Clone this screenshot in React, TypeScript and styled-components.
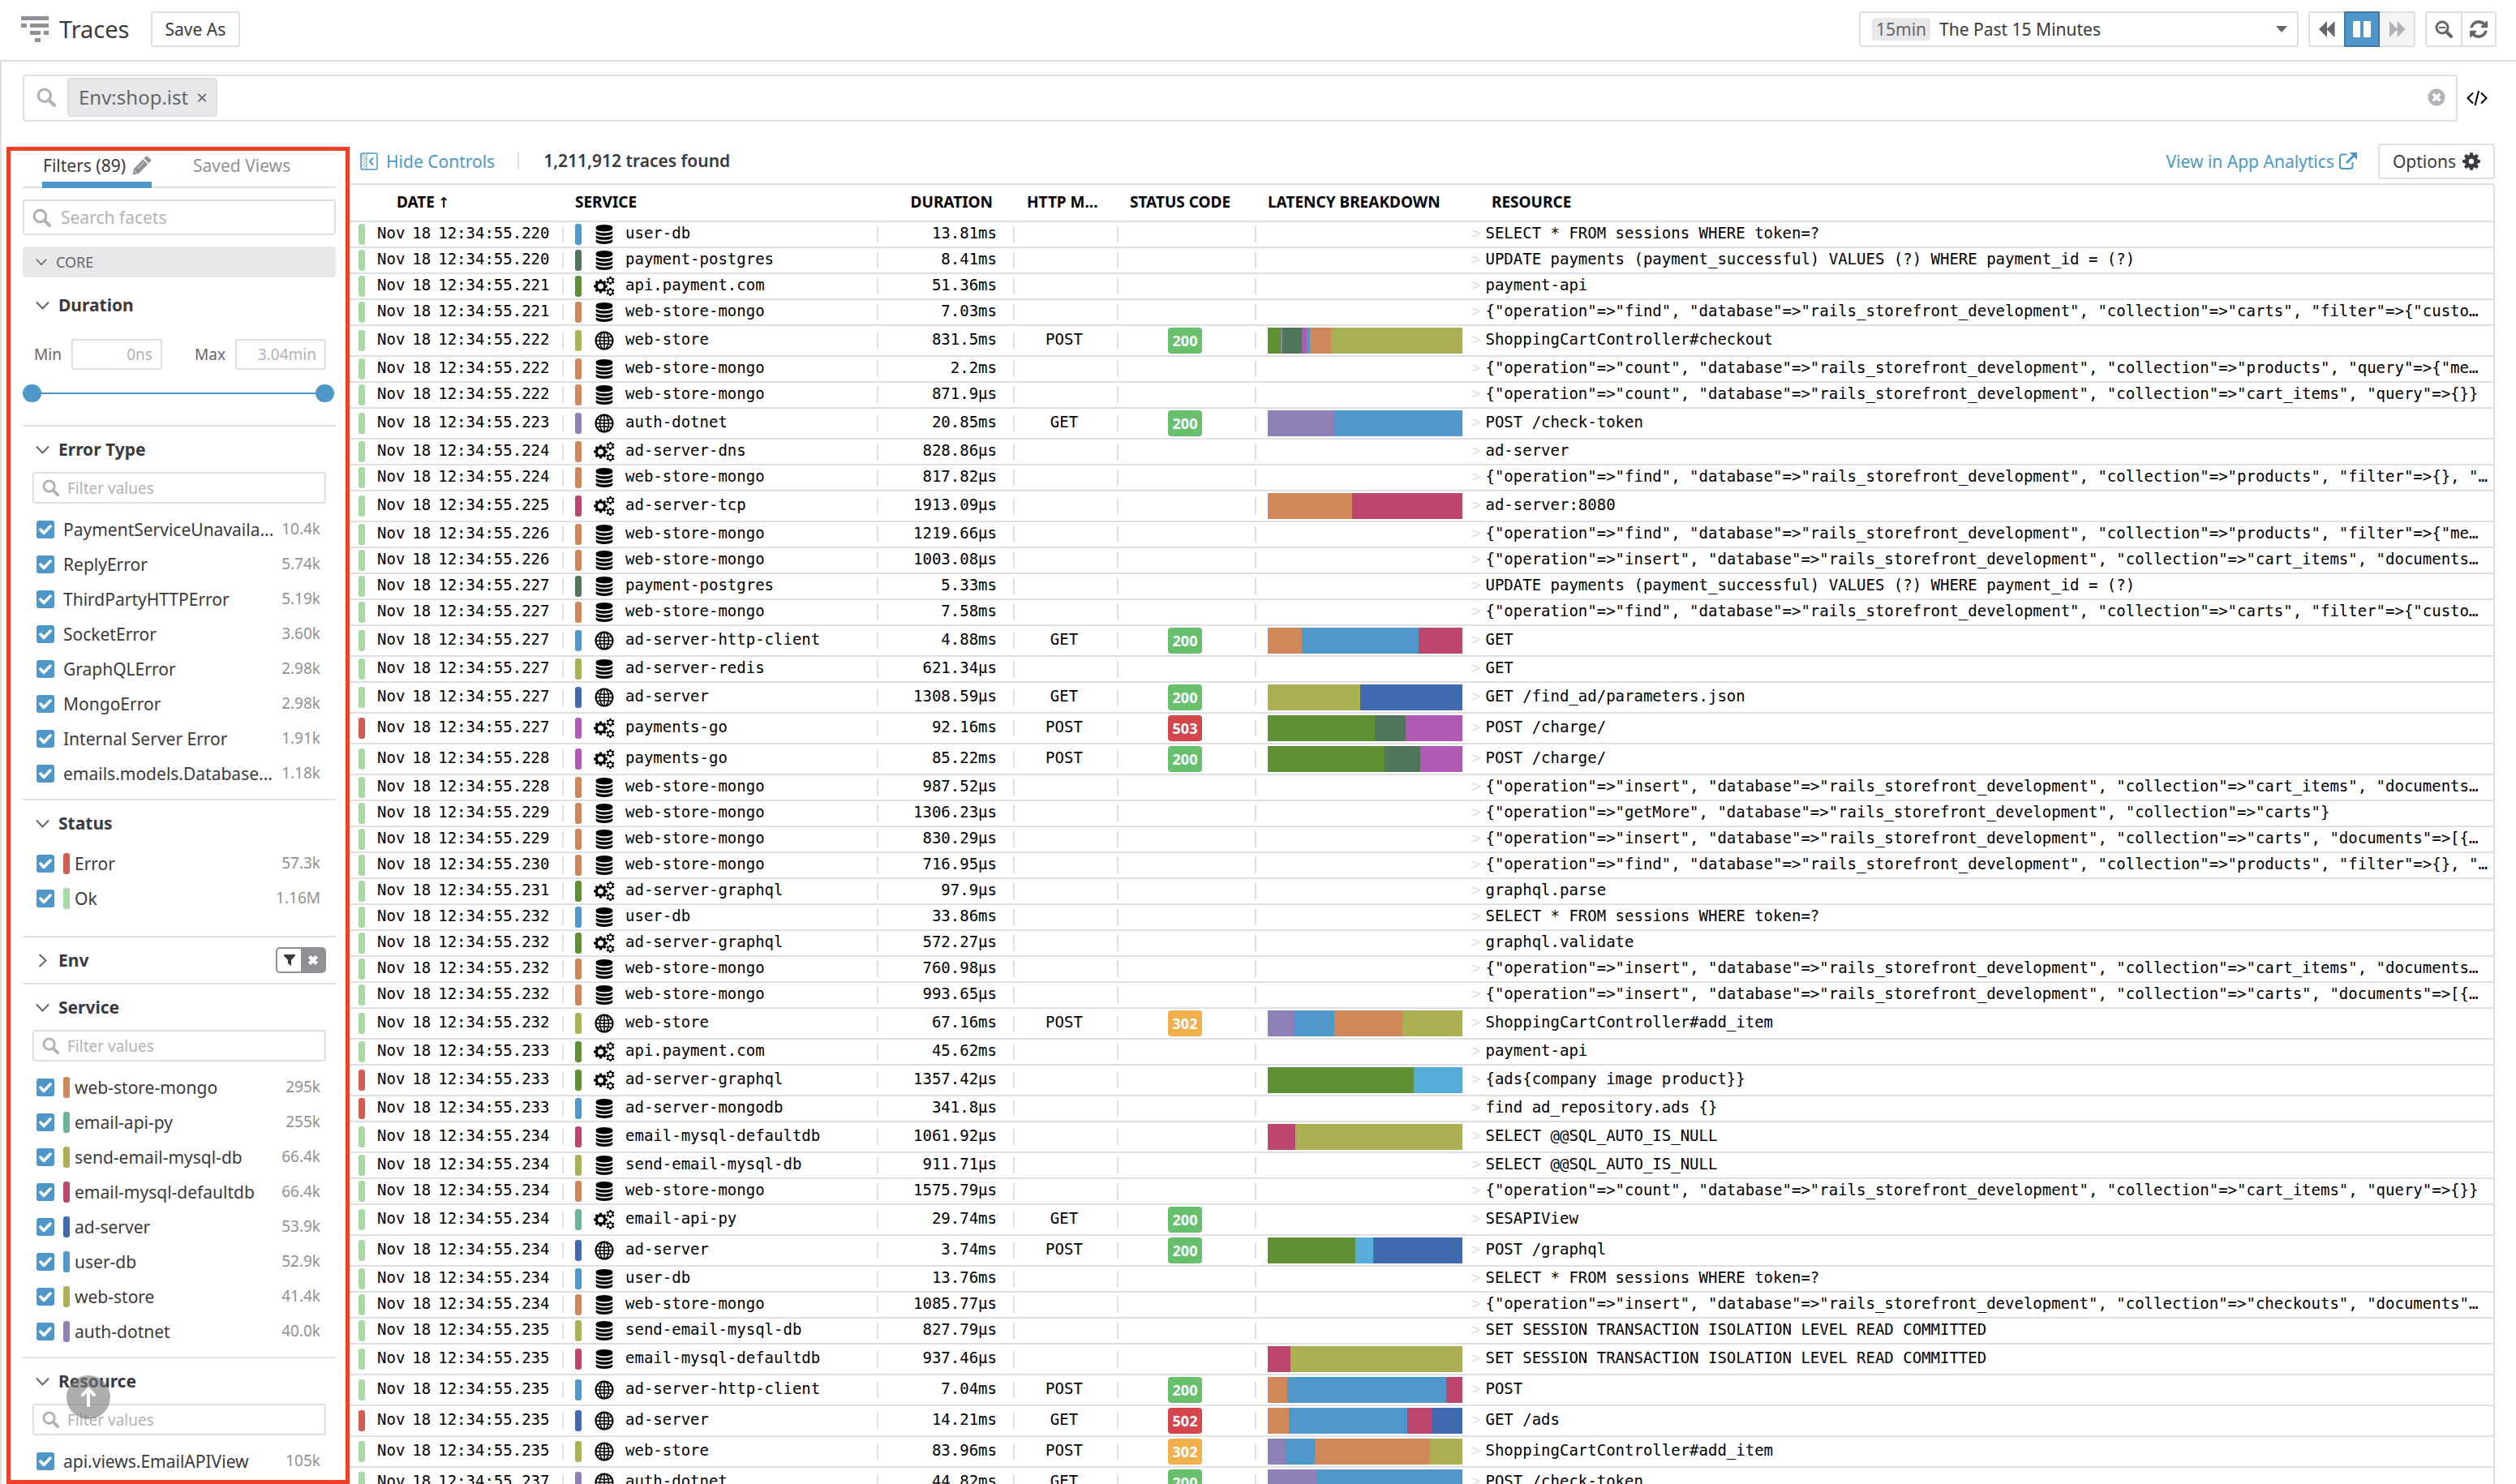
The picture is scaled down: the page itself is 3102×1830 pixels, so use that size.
import React from "react";
import styled, { createGlobalStyle, css } from "styled-components";

const color = {
  text: "#3a3a40",
  muted: "#66666b",
  soft: "#929096",
  faint: "#b3b1b7",
  line: "#dedee3",
  fill: "#e8e8ea",
  blue: "#4e97c8",
  link: "#4998cb",
  highlight: "#ee4026",
  ok: "#a7dba5",
  error: "#d35c53",
};

const hue = {
  blue: "#4f98c9",
  sky: "#58aeda",
  navy: "#426ab0",
  orange: "#d0885a",
  olive: "#abb153",
  green: "#5f9033",
  pine: "#50755a",
  purple: "#8f80b6",
  pink: "#bd466e",
  magenta: "#b05ab6",
  teal: "#70b39c",
};

const sans = `"Noto Sans", "Open Sans", sans-serif`;
const mono = `"DejaVu Sans Mono", "Liberation Mono", monospace`;

const GlobalStyle = createGlobalStyle`
  *, *::before, *::after { box-sizing: border-box; }
  body { margin: 0; background: #fff; color: ${color.text}; font: 21px/28px ${sans}; }
  button, input, select { font: inherit; color: inherit; margin: 0; }
  button { cursor: pointer; }
  h1, h2, h3, ul { margin: 0; padding: 0; }
`;

/* ---------- icons ---------- */

const Svg = styled.svg<{ $size?: number }>`
  display: block;
  flex: none;
  width: ${(p) => p.$size ?? 22}px;
  height: ${(p) => p.$size ?? 22}px;
  fill: currentColor;
`;

type IconProps = { size?: number };

const LogoIcon = () => (
  <Svg viewBox="0 0 34 34" $size={34} aria-hidden>
    <path d="M0 1h34v5H0zM0 10h7v5H0zM11 10h23v5H11zM11 19h13v5H11zM28 19h6v5h-6zM17 28h7v5h-7z" />
  </Svg>
);

const SearchIcon = ({ size }: IconProps) => (
  <Svg viewBox="0 0 22 22" $size={size} aria-hidden>
    <circle cx="9" cy="9" r="7" fill="none" stroke="currentColor" strokeWidth="3" />
    <path d="M14 14l6 6" stroke="currentColor" strokeWidth="4" strokeLinecap="round" />
  </Svg>
);

const ZoomOutIcon = () => (
  <Svg viewBox="0 0 22 22" aria-hidden>
    <circle cx="9" cy="9" r="7" fill="none" stroke="currentColor" strokeWidth="3" />
    <path d="M14 14l6 6" stroke="currentColor" strokeWidth="4" strokeLinecap="round" />
    <path d="M5 9h8" stroke="currentColor" strokeWidth="2" />
  </Svg>
);

const RefreshIcon = () => (
  <Svg viewBox="128 128 1536 1536" aria-hidden>
    <path d="M1639 1056q0 5-1 7-64 268-268 434.500t-478 166.500q-146 0-282.500-55t-243.500-157l-129 129q-19 19-45 19t-45-19-19-45v-448q0-26 19-45t45-19h448q26 0 45 19t19 45-19 45l-137 137q71 66 161 102t187 36q134 0 250-65t186-179q11-17 53-117 8-23 30-23h192q13 0 22.500 9.500t9.500 22.500zm25-800v448q0 26-19 45t-45 19h-448q-26 0-45-19t-19-45 19-45l138-138q-148-137-349-137-134 0-250 65t-186 179q-11 17-53 117-8 23-30 23h-199q-13 0-22.500-9.500t-9.500-22.500v-7q65-268 270-434.500t480-166.500q146 0 284 55.500t245 156.500l130-129q19-19 45-19t45 19 19 45z" />
  </Svg>
);

const RewindIcon = () => (
  <Svg viewBox="0 0 22 22" aria-hidden>
    <path d="M11 1v20L1 11zM20.500 1v20l-10-10z" />
  </Svg>
);

const ForwardIcon = () => (
  <Svg viewBox="0 0 22 22" aria-hidden>
    <path d="M2 1v20l10-10zM11.500 1v20l10-10z" />
  </Svg>
);

const PauseIcon = () => (
  <Svg viewBox="0 0 22 22" aria-hidden>
    <path d="M0 1h9v20H0zM13 1h9v20h-9z" />
  </Svg>
);

const CaretIcon = () => (
  <Svg viewBox="0 0 14 14" $size={14} aria-hidden>
    <path d="M0 3h14l-7 8z" />
  </Svg>
);

const ClearIcon = () => (
  <Svg viewBox="0 0 22 22" aria-hidden>
    <circle cx="11" cy="11" r="10.500" />
    <path d="M6.800 6.800l8.400 8.400M15.200 6.800l-8.400 8.400" stroke="#fff" strokeWidth="3.600" />
  </Svg>
);

const CodeIcon = () => (
  <Svg viewBox="0 0 26 26" $size={26} aria-hidden>
    <path d="M8 6.500L1.500 13 8 19.500M18 6.500l6.500 6.500-6.500 6.500M15 4l-4.500 18" fill="none" stroke="currentColor" strokeWidth="2" />
  </Svg>
);

const PencilIcon = () => (
  <Svg viewBox="0 0 24 24" $size={24} aria-hidden>
    <path d="M17 0.700q1-.8 2 0l4 4q.8 1 0 2l-2.600 2.600-6-6zM13.300 4.500l6 6L7.600 22.200l-7 1.300 1.200-7z" />
    <path d="M6.500 16l8-8M2.200 18.300l3.400 3.400" stroke="#fff" strokeWidth="1" />
  </Svg>
);

const ExternalIcon = () => (
  <Svg viewBox="0 0 22 22" aria-hidden>
    <path d="M9.500 2.500H4a3 3 0 0 0-3 3V17a3 3 0 0 0 3 3h9.500a3 3 0 0 0 3-3v-5" fill="none" stroke="currentColor" strokeWidth="2" />
    <path d="M9 13L18 4" stroke="currentColor" strokeWidth="3" />
    <path d="M13 0h9v9z" />
  </Svg>
);

const gear = (cx: number, cy: number, r: number, teeth: number, hole: number, tooth: number) => {
  const pts: string[] = [];
  for (let i = 0; i < teeth; i++) {
    const a = (i * 2 * Math.PI) / teeth;
    const s = Math.PI / teeth;
    [
      [r * tooth, -s * 0.75],
      [r, -s * 0.4],
      [r, s * 0.4],
      [r * tooth, s * 0.75],
    ].forEach(([rad, off]) => {
      pts.push(`${(cx + rad * Math.sin(a + off)).toFixed(2)} ${(cy - rad * Math.cos(a + off)).toFixed(2)}`);
    });
  }
  return `M${pts.join("L")}ZM${cx - hole} ${cy}a${hole} ${hole} 0 1 0 ${hole * 2} 0a${hole} ${hole} 0 1 0 ${-hole * 2} 0Z`;
};

const GearIcon = () => (
  <Svg viewBox="0 0 22 22" aria-hidden>
    <path fillRule="evenodd" d={gear(11, 11, 11, 8, 3.3, 0.74)} />
  </Svg>
);

const CogsIcon = () => (
  <Svg viewBox="0 0 26 24" $size={26} aria-hidden>
    <path
      fillRule="evenodd"
      d={gear(8.5, 12, 8.5, 8, 3.5, 0.76) + gear(20.5, 5, 5.2, 6, 2.2, 0.7) + gear(20.5, 19, 5.2, 6, 2.2, 0.7)}
    />
  </Svg>
);

const DatabaseIcon = () => (
  <Svg viewBox="0 0 1792 1792" $size={24} aria-hidden>
    <path d="M896 768q237 0 443-43t325-127v170q0 69-103 128t-280 93.500-385 34.500-385-34.500-280-93.500-103-128v-170q119 84 325 127t443 43zm0 768q237 0 443-43t325-127v170q0 69-103 128t-280 93.500-385 34.500-385-34.500-280-93.500-103-128v-170q119 84 325 127t443 43zm0-384q237 0 443-43t325-127v170q0 69-103 128t-280 93.500-385 34.500-385-34.500-280-93.500-103-128v-170q119 84 325 127t443 43zm0-1152q208 0 385 34.500t280 93.500 103 128v128q0 69-103 128t-280 93.500-385 34.500-385-34.500-280-93.500-103-128v-128q0-69 103-128t280-93.500 385-34.500z" />
  </Svg>
);

const GlobeIcon = () => (
  <Svg viewBox="0 0 24 24" $size={24} aria-hidden>
    <g fill="none" stroke="currentColor" strokeWidth="1.500">
      <circle cx="12" cy="12" r="10.500" strokeWidth="2" />
      <ellipse cx="12" cy="12" rx="5.500" ry="10.500" />
      <path d="M12 1.500v21M1.500 12h21M3 7q9 2.500 18 0M3 17q9-2.500 18 0" />
    </g>
  </Svg>
);

const PanelIcon = () => (
  <Svg viewBox="0 0 22 22" aria-hidden>
    <rect x="1" y="1" width="20" height="20" rx="2" fill="none" stroke="currentColor" strokeWidth="1.500" />
    <path d="M8 1v20M1 6l5-5M1 10l7-7M1 14l7-7M1 18l7-7M3 20l5-5" stroke="currentColor" strokeWidth="1" opacity="0.8" />
    <path d="M16 6.500L12 11l4 4.500" fill="none" stroke="currentColor" strokeWidth="2" />
  </Svg>
);

const ChevronDown = ({ size = 17 }: IconProps) => (
  <Svg viewBox="0 0 17 17" $size={size} aria-hidden>
    <path d="M1 4.500l7.500 8 7.500-8" fill="none" stroke="currentColor" strokeWidth="2" />
  </Svg>
);

const ChevronRight = () => (
  <Svg viewBox="0 0 17 17" $size={17} aria-hidden>
    <path d="M4.500 1l8 7.500-8 7.500" fill="none" stroke="currentColor" strokeWidth="2" />
  </Svg>
);

const CheckIcon = styled(Svg)`
  grid-area: 1 / 1;
  place-self: center;
  pointer-events: none;
  color: #fff;
`;

const FunnelIcon = () => (
  <Svg viewBox="0 0 16 16" $size={16} aria-hidden>
    <path d="M1 1h14v1.500L10 8v7l-4-3V8L1 2.500z" />
  </Svg>
);

const CrossIcon = () => (
  <Svg viewBox="0 0 14 14" $size={14} aria-hidden>
    <path d="M2.500 2.500l9 9M11.500 2.500l-9 9" stroke="currentColor" strokeWidth="4.400" />
  </Svg>
);

const ArrowUpIcon = () => (
  <Svg viewBox="0 0 24 24" $size={24} aria-hidden>
    <path d="M12 23V2M5 9l7-7 7 7" fill="none" stroke="currentColor" strokeWidth="4" strokeLinecap="round" strokeLinejoin="round" />
  </Svg>
);

/* ---------- page frame ---------- */

const Page = styled.div`
  display: flex;
  flex-direction: column;
  height: 100vh;
  overflow: hidden;
`;

const TopBar = styled.header`
  display: flex;
  align-items: center;
  flex: none;
  height: 76px;
  padding: 0 24px 2px 26px;
  border-bottom: 2px solid ${color.line};
`;

const Brand = styled.div`
  display: flex;
  align-items: center;
  gap: 13px;
  margin-right: 26px;
  color: ${color.soft};
`;

const Title = styled.h1`
  color: ${color.text};
  font-size: 29px;
  font-weight: 400;
  line-height: 36px;
`;

const Button = styled.button`
  display: flex;
  align-items: center;
  gap: 8px;
  height: 44px;
  padding: 0 16px;
  background: #fff;
  border: 2px solid ${color.line};
  border-radius: 4px;
`;

const Controls = styled.div`
  display: flex;
  gap: 12px;
  margin-left: auto;
`;

const RangePicker = styled.label`
  display: flex;
  align-items: center;
  gap: 11px;
  width: 542px;
  height: 44px;
  padding: 0 12px 0 14px;
  border: 2px solid ${color.line};
  border-radius: 4px;
  color: ${color.muted};
`;

const RangeChip = styled.span`
  padding: 0 5px;
  border-radius: 4px;
  background: ${color.fill};
`;

const RangeSelect = styled.select`
  flex: 1;
  min-width: 0;
  padding: 0;
  appearance: none;
  border: 0;
  background: none;
  color: ${color.text};
`;

const ButtonGroup = styled.div`
  display: flex;
  border: 2px solid ${color.line};
  border-radius: 4px;
`;

const GroupButton = styled.button<{ $active?: boolean; $divided?: boolean }>`
  display: grid;
  place-items: center;
  width: 42px;
  height: 40px;
  padding: 0;
  border: 0;
  background: #fff;
  color: ${color.muted};
  ${(p) => p.$divided && css`border-left: 2px solid ${color.line};`}
  ${(p) =>
    p.$active &&
    css`
      width: 44px;
      height: 44px;
      margin: -2px 0;
      border: 2px solid #3f7ba6;
      background: ${color.blue};
      color: #fff;
    `}
  &:disabled {
    background: #f4f4f4;
    color: ${color.faint};
  }
`;

const Content = styled.div`
  display: flex;
  flex-direction: column;
  flex: 1;
  min-height: 0;
  border-left: 2px solid ${color.line};
`;

const SearchRow = styled.form`
  display: flex;
  align-items: center;
  gap: 11px;
  flex: none;
  padding: 16px 35px 0 26px;
`;

const SearchBox = styled.div`
  display: flex;
  align-items: center;
  flex: 1;
  gap: 14px;
  height: 58px;
  padding: 0 13px 2px 15px;
  border: 2px solid ${color.line};
  border-radius: 4px;
  color: ${color.faint};
`;

const Tag = styled.span`
  display: flex;
  align-items: center;
  gap: 10px;
  height: 48px;
  padding: 0 10px 0 12px;
  border: 2px solid ${color.line};
  border-radius: 4px;
  background: ${color.fill};
  color: ${color.muted};
  font-size: 24px;
`;

const BareInput = styled.input`
  flex: 1;
  min-width: 0;
  padding: 0;
  border: 0;
  outline: 0;
  background: none;
  color: ${color.text};
  &::placeholder {
    color: ${color.faint};
    opacity: 1;
  }
`;

const IconButton = styled.button<{ $tone?: string }>`
  display: grid;
  place-items: center;
  padding: 0;
  border: 0;
  background: none;
  color: ${(p) => p.$tone ?? "inherit"};
`;

const Body = styled.div`
  display: flex;
  flex: 1;
  min-height: 0;
`;

/* ---------- sidebar ---------- */

const Sidebar = styled.aside`
  flex: none;
  width: 423px;
  margin: 31px 0 0 6px;
  padding: 0 12px 0 15px;
  border: 5px solid ${color.highlight};
  overflow: hidden;
`;

const Tabs = styled.div`
  display: flex;
  gap: 50px;
  padding-left: 24px;
  box-shadow: inset 0 -2px ${color.line};
`;

const Tab = styled.button<{ $active?: boolean }>`
  display: flex;
  align-items: center;
  gap: 8px;
  height: 46px;
  padding: 0 0 2px 1px;
  border: 0;
  border-bottom: 8px solid ${(p) => (p.$active ? color.blue : "transparent")};
  background: none;
  color: ${(p) => (p.$active ? color.text : color.soft)};
  svg {
    color: ${color.soft};
  }
`;

const FacetSearch = styled.label`
  display: flex;
  align-items: center;
  gap: 12px;
  height: 44px;
  margin-top: 14px;
  padding: 0 10px;
  border: 2px solid ${color.line};
  border-radius: 4px;
  color: ${color.faint};
`;

const GroupHeading = styled.h2`
  display: flex;
  align-items: center;
  gap: 11px;
  height: 38px;
  margin: 14px 0 6px;
  padding-left: 16px;
  border-radius: 4px;
  background: ${color.fill};
  color: ${color.muted};
  font-size: 18px;
  font-weight: 400;
`;

const Facet = styled.section<{ $bottom?: number }>`
  padding: 0 12px ${(p) => p.$bottom ?? 0}px;
  & + & {
    border-top: 2px solid ${color.line};
  }
`;

const FacetHeading = styled.h3`
  display: flex;
  align-items: center;
  gap: 11px;
  height: 56px;
  padding-left: 4px;
  color: ${color.muted};
  font-size: 21px;
`;

const FacetName = styled.span`
  flex: 1;
  color: ${color.text};
`;

const ValueFilter = styled.label`
  display: flex;
  align-items: center;
  gap: 10px;
  height: 39px;
  padding: 0 10px;
  border: 2px solid ${color.line};
  border-radius: 3px;
  color: ${color.faint};
  font-size: 19px;
`;

const ValueList = styled.ul<{ $top: number }>`
  padding-top: ${(p) => p.$top}px;
  list-style: none;
`;

const ValueRow = styled.label`
  display: flex;
  align-items: center;
  height: 43px;
  padding: 0 7px 0 5px;
`;

const CheckWrap = styled.span`
  display: grid;
  flex: none;
  margin-right: 11px;
`;

const Check = styled.input`
  grid-area: 1 / 1;
  width: 22px;
  height: 22px;
  appearance: none;
  border-radius: 3px;
  background: ${color.blue};
`;

const Swatch = styled.span<{ $color: string }>`
  flex: none;
  width: 8px;
  height: 26px;
  border-radius: 3px;
  background: ${(p) => p.$color};
`;

const ValueSwatch = styled(Swatch)`
  margin-right: 6px;
`;

const ValueName = styled.span`
  flex: 1;
  white-space: nowrap;
`;

const ValueCount = styled.span`
  padding-bottom: 2px;
  color: ${color.soft};
  font-size: 19px;
`;

const MinMax = styled.div`
  display: flex;
  justify-content: space-between;
  margin-top: 14px;
`;

const Bound = styled.label`
  display: flex;
  align-items: center;
  gap: 12px;
  padding-left: 2px;
  color: ${color.muted};
  font-size: 19px;
`;

const BoundInput = styled.input`
  width: 112px;
  height: 38px;
  padding: 0 10px;
  border: 2px solid ${color.line};
  border-radius: 3px;
  color: ${color.faint};
  text-align: right;
`;

const DualSlider = styled.div`
  position: relative;
  height: 24px;
  margin: 17px -10px 27px -12px;
  background: linear-gradient(${color.blue}, ${color.blue}) center / calc(100% - 24px) 2px no-repeat;
`;

const Slider = styled.input`
  position: absolute;
  inset: 0;
  width: 100%;
  height: 24px;
  margin: 0;
  appearance: none;
  background: none;
  pointer-events: none;
  &::-webkit-slider-thumb {
    width: 23px;
    height: 22px;
    appearance: none;
    border-radius: 11px;
    background: ${color.blue};
    pointer-events: auto;
  }
`;

const FilterToggle = styled.span`
  display: flex;
  height: 32px;
  border: 2px solid ${color.soft};
  border-radius: 5px;
`;

const ToggleButton = styled.button<{ $filled?: boolean }>`
  display: grid;
  place-items: center;
  width: 29px;
  padding: 0;
  border: 0;
  background: ${(p) => (p.$filled ? color.soft : "none")};
  color: ${(p) => (p.$filled ? "#fff" : color.text)};
`;

const ScrollTop = styled.button`
  position: fixed;
  left: 82px;
  bottom: 80px;
  display: grid;
  place-items: center;
  width: 54px;
  height: 54px;
  padding: 0;
  border: 0;
  border-radius: 50%;
  background: rgba(120, 120, 120, 0.6);
  color: #fff;
`;

/* ---------- trace list ---------- */

const Main = styled.main`
  flex: 1;
  min-width: 0;
  margin-right: 26px;
  padding-top: 27px;
  overflow: hidden;
`;

const Toolbar = styled.div`
  display: flex;
  align-items: center;
  height: 44px;
  margin-bottom: 5px;
  padding-left: 13px;
`;

const LinkButton = styled.button`
  display: flex;
  align-items: center;
  gap: 10px;
  padding: 0 28px 0 0;
  border: 0;
  background: none;
  color: ${color.link};
`;

const Found = styled.strong`
  padding: 0 0 2px 30px;
  border-left: 2px solid ${color.line};
  font-weight: 600;
  line-height: 20px;
`;

const AnalyticsLink = styled.a`
  display: flex;
  align-items: center;
  gap: 6px;
  margin: 0 26px 0 auto;
  color: ${color.link};
  text-decoration: none;
`;

const Table = styled.table`
  width: 100%;
  table-layout: fixed;
  border: solid ${color.line};
  border-width: 2px 2px 0 0;
  border-radius: 0 4px 0 0;
  border-spacing: 0;
  color: #000;
`;

const Col = styled.col<{ $width?: number }>`
  width: ${(p) => (p.$width ? `${p.$width}px` : "auto")};
`;

const HeadCell = styled.th<{ $left?: number; $right?: number; $align?: string }>`
  height: 46px;
  padding: 0 ${(p) => p.$right ?? 0}px 2px ${(p) => p.$left ?? 0}px;
  border-bottom: 2px solid ${color.line};
  font-size: 19px;
  text-align: ${(p) => p.$align ?? "left"};
  white-space: nowrap;
`;

const SortArrow = styled.span`
  margin-left: 4px;
  font: 24px/20px ${mono};
`;

const BodyCell = styled.td<{ $tall?: boolean }>`
  height: ${(p) => (p.$tall ? 38 : 32)}px;
  padding: 0;
  border-bottom: 2px solid ${color.line};
  font: 19px/18px ${mono};
  white-space: nowrap;
`;

const Cell = styled.div<{ $align?: string; $plain?: boolean }>`
  display: flex;
  align-items: center;
  justify-content: ${(p) => p.$align ?? "flex-start"};
  height: 20px;
  padding-left: ${(p) => (p.$align === "center" ? 10 : 14)}px;
  padding-right: ${(p) => (p.$align === "flex-end" ? 20 : 14)}px;
  border-right: ${(p) => (p.$plain ? 0 : 2)}px solid ${color.line};
`;

const DateCell = styled(Cell)`
  padding-left: 11px;
`;

const CellText = styled.span`
  padding-bottom: 4px;
`;

const Stamp = styled.time`
  display: flex;
  gap: 9px;
  margin-left: 15px;
  padding-bottom: 4px;
`;

const ServiceIcon = styled.span`
  display: grid;
  place-items: center;
  flex: none;
  width: 26px;
  margin: 0 13px 0 15px;
`;

const Badge = styled.span<{ $color: string }>`
  flex: none;
  width: 42px;
  border-radius: 4px;
  background: ${(p) => p.$color};
  color: #fff;
  font: 700 18px/32px ${sans};
  text-align: center;
`;

const LatencyBar = styled.div`
  display: flex;
  flex: none;
  width: 240px;
  height: 32px;
`;

const Segment = styled.span<{ $color: string; $share: number }>`
  flex: ${(p) => p.$share} 0 0;
  background: ${(p) => p.$color};
`;

const ResourceCell = styled.div`
  display: flex;
  align-items: center;
  gap: 6px;
  padding: 0 0 4px 1px;
  line-height: 24px;
`;

const Marker = styled.span`
  color: ${color.line};
`;

/* ---------- data ---------- */

type Kind = "db" | "cogs" | "web";

const services: Record<string, [string, Kind]> = {
  "user-db": [hue.blue, "db"],
  "payment-postgres": [hue.pine, "db"],
  "api.payment.com": [hue.green, "cogs"],
  "web-store-mongo": [hue.orange, "db"],
  "web-store": [hue.olive, "web"],
  "auth-dotnet": [hue.purple, "web"],
  "ad-server-dns": [hue.orange, "cogs"],
  "ad-server-tcp": [hue.pink, "cogs"],
  "ad-server-http-client": [hue.blue, "web"],
  "ad-server-redis": [hue.olive, "db"],
  "ad-server": [hue.navy, "web"],
  "payments-go": [hue.magenta, "cogs"],
  "ad-server-graphql": [hue.green, "cogs"],
  "ad-server-mongodb": [hue.blue, "db"],
  "email-mysql-defaultdb": [hue.pink, "db"],
  "send-email-mysql-db": [hue.olive, "db"],
  "email-api-py": [hue.teal, "cogs"],
};

type Seg = [string, number];

type Trace = {
  ms: number;
  service: string;
  duration: string;
  resource: string;
  method?: string;
  code?: number;
  latency?: Seg[];
  failed?: boolean;
};

const t = (ms: number, service: string, duration: string, resource: string, more: Partial<Trace> = {}): Trace => ({
  ms,
  service,
  duration,
  resource,
  ...more,
});

const op = (name: string, rest: string) =>
  `{"operation"=>"${name}", "database"=>"rails_storefront_development", "collection"=>${rest}`;

const findCarts = op("find", `"carts", "filter"=>{"custo…`);
const insertItems = op("insert", `"cart_items", "documents…`);
const insertCarts = op("insert", `"carts", "documents"=>[{…`);
const findProducts = op("find", `"products", "filter"=>{}, "…`);
const countItems = op("count", `"cart_items", "query"=>{}}`);
const selectSession = "SELECT * FROM sessions WHERE token=?";
const updatePayment = "UPDATE payments (payment_successful) VALUES (?) WHERE payment_id = (?)";
const isolation = "SET SESSION TRANSACTION ISOLATION LEVEL READ COMMITTED";

const traces: Trace[] = [
  t(220, "user-db", "13.81ms", selectSession),
  t(220, "payment-postgres", "8.41ms", updatePayment),
  t(221, "api.payment.com", "51.36ms", "payment-api"),
  t(221, "web-store-mongo", "7.03ms", findCarts),
  t(222, "web-store", "831.5ms", "ShoppingCartController#checkout", {
    method: "POST",
    code: 200,
    latency: [[hue.green, 29], [hue.purple, 3], [hue.pine, 44], [hue.magenta, 12], [hue.blue, 6], [hue.orange, 48], [hue.olive, 295]],
  }),
  t(222, "web-store-mongo", "2.2ms", op("count", `"products", "query"=>{"me…`)),
  t(222, "web-store-mongo", "871.9µs", countItems),
  t(223, "auth-dotnet", "20.85ms", "POST /check-token", {
    method: "GET",
    code: 200,
    latency: [[hue.purple, 149], [hue.blue, 288]],
  }),
  t(224, "ad-server-dns", "828.86µs", "ad-server"),
  t(224, "web-store-mongo", "817.82µs", findProducts),
  t(225, "ad-server-tcp", "1913.09µs", "ad-server:8080", { latency: [[hue.orange, 189], [hue.pink, 248]] }),
  t(226, "web-store-mongo", "1219.66µs", op("find", `"products", "filter"=>{"me…`)),
  t(226, "web-store-mongo", "1003.08µs", insertItems),
  t(227, "payment-postgres", "5.33ms", updatePayment),
  t(227, "web-store-mongo", "7.58ms", findCarts),
  t(227, "ad-server-http-client", "4.88ms", "GET", {
    method: "GET",
    code: 200,
    latency: [[hue.orange, 94], [hue.blue, 323], [hue.pink, 120]],
  }),
  t(227, "ad-server-redis", "621.34µs", "GET"),
  t(227, "ad-server", "1308.59µs", "GET /find_ad/parameters.json", {
    method: "GET",
    code: 200,
    latency: [[hue.olive, 255], [hue.navy, 282]],
  }),
  t(227, "payments-go", "92.16ms", "POST /charge/", {
    method: "POST",
    code: 503,
    failed: true,
    latency: [[hue.green, 296], [hue.pine, 85], [hue.magenta, 156]],
  }),
  t(228, "payments-go", "85.22ms", "POST /charge/", {
    method: "POST",
    code: 200,
    latency: [[hue.green, 322], [hue.pine, 99], [hue.magenta, 116]],
  }),
  t(228, "web-store-mongo", "987.52µs", insertItems),
  t(229, "web-store-mongo", "1306.23µs", op("getMore", `"carts"}`)),
  t(229, "web-store-mongo", "830.29µs", insertCarts),
  t(230, "web-store-mongo", "716.95µs", findProducts),
  t(231, "ad-server-graphql", "97.9µs", "graphql.parse"),
  t(232, "user-db", "33.86ms", selectSession),
  t(232, "ad-server-graphql", "572.27µs", "graphql.validate"),
  t(232, "web-store-mongo", "760.98µs", insertItems),
  t(232, "web-store-mongo", "993.65µs", insertCarts),
  t(232, "web-store", "67.16ms", "ShoppingCartController#add_item", {
    method: "POST",
    code: 302,
    latency: [[hue.purple, 73], [hue.blue, 111], [hue.orange, 188], [hue.olive, 165]],
  }),
  t(233, "api.payment.com", "45.62ms", "payment-api"),
  t(233, "ad-server-graphql", "1357.42µs", "{ads{company image product}}", {
    failed: true,
    latency: [[hue.green, 403], [hue.sky, 134]],
  }),
  t(233, "ad-server-mongodb", "341.8µs", "find ad_repository.ads {}", { failed: true }),
  t(234, "email-mysql-defaultdb", "1061.92µs", "SELECT @@SQL_AUTO_IS_NULL", {
    latency: [[hue.pink, 76], [hue.olive, 461]],
  }),
  t(234, "send-email-mysql-db", "911.71µs", "SELECT @@SQL_AUTO_IS_NULL"),
  t(234, "web-store-mongo", "1575.79µs", countItems),
  t(234, "email-api-py", "29.74ms", "SESAPIView", { method: "GET", code: 200 }),
  t(234, "ad-server", "3.74ms", "POST /graphql", {
    method: "POST",
    code: 200,
    latency: [[hue.green, 242], [hue.sky, 49], [hue.navy, 246]],
  }),
  t(234, "user-db", "13.76ms", selectSession),
  t(234, "web-store-mongo", "1085.77µs", op("insert", `"checkouts", "documents"…`)),
  t(235, "send-email-mysql-db", "827.79µs", isolation),
  t(235, "email-mysql-defaultdb", "937.46µs", isolation, { latency: [[hue.pink, 63], [hue.olive, 474]] }),
  t(235, "ad-server-http-client", "7.04ms", "POST", {
    method: "POST",
    code: 200,
    latency: [[hue.orange, 54], [hue.blue, 439], [hue.pink, 44]],
  }),
  t(235, "ad-server", "14.21ms", "GET /ads", {
    method: "GET",
    code: 502,
    failed: true,
    latency: [[hue.orange, 58], [hue.blue, 327], [hue.pink, 67], [hue.navy, 85]],
  }),
  t(235, "web-store", "83.96ms", "ShoppingCartController#add_item", {
    method: "POST",
    code: 302,
    latency: [[hue.purple, 49], [hue.blue, 81], [hue.orange, 318], [hue.olive, 89]],
  }),
  t(237, "auth-dotnet", "44.82ms", "POST /check-token", {
    method: "GET",
    code: 200,
    latency: [[hue.purple, 134], [hue.blue, 403]],
  }),
];

const badgeColor = (code: number) => (code >= 500 ? "#d5454c" : code >= 300 ? "#f2b04c" : "#68c06c");

type FacetValue = [name: string, count: string, swatch?: string];

const errorTypes: FacetValue[] = [
  ["PaymentServiceUnavaila...", "10.4k"],
  ["ReplyError", "5.74k"],
  ["ThirdPartyHTTPError", "5.19k"],
  ["SocketError", "3.60k"],
  ["GraphQLError", "2.98k"],
  ["MongoError", "2.98k"],
  ["Internal Server Error", "1.91k"],
  ["emails.models.Database...", "1.18k"],
];

const statuses: FacetValue[] = [
  ["Error", "57.3k", color.error],
  ["Ok", "1.16M", color.ok],
];

const serviceValues: FacetValue[] = [
  ["web-store-mongo", "295k", hue.orange],
  ["email-api-py", "255k", hue.teal],
  ["send-email-mysql-db", "66.4k", hue.olive],
  ["email-mysql-defaultdb", "66.4k", hue.pink],
  ["ad-server", "53.9k", hue.navy],
  ["user-db", "52.9k", hue.blue],
  ["web-store", "41.4k", hue.olive],
  ["auth-dotnet", "40.0k", hue.purple],
];

/* ---------- composed parts ---------- */

const kindIcon: Record<Kind, React.ReactNode> = {
  db: <DatabaseIcon />,
  cogs: <CogsIcon />,
  web: <GlobeIcon />,
};

const Values = ({ items, top = 10 }: { items: FacetValue[]; top?: number }) => (
  <ValueList $top={top}>
    {items.map(([name, count, swatch]) => (
      <li key={name}>
        <ValueRow>
          <CheckWrap>
            <Check type="checkbox" defaultChecked />
            <CheckIcon viewBox="0 0 16 16" $size={16} aria-hidden>
              <path d="M2 8l4 4.500L14 4" fill="none" stroke="currentColor" strokeWidth="3.500" strokeLinejoin="round" strokeLinecap="round" />
            </CheckIcon>
          </CheckWrap>
          {swatch && <ValueSwatch $color={swatch} />}
          <ValueName>{name}</ValueName>
          <ValueCount>{count}</ValueCount>
        </ValueRow>
      </li>
    ))}
  </ValueList>
);

const Heading = ({ name, closed, children }: { name: string; closed?: boolean; children?: React.ReactNode }) => (
  <FacetHeading>
    {closed ? <ChevronRight /> : <ChevronDown />}
    <FacetName>{name}</FacetName>
    {children}
  </FacetHeading>
);

const FilterValues = ({ of }: { of: string }) => (
  <ValueFilter>
    <SearchIcon size={21} />
    <BareInput placeholder="Filter values" aria-label={`Filter ${of} values`} />
  </ValueFilter>
);

const TraceRow = ({ trace }: { trace: Trace }) => {
  const [tint, kind] = services[trace.service];
  const tall = Boolean(trace.code || trace.latency);
  return (
    <tr>
      <BodyCell $tall={tall}>
        <DateCell>
          <Swatch $color={trace.failed ? color.error : color.ok} />
          <Stamp>
            <span>Nov</span>
            <span>18</span>
            <span>12:34:55.{trace.ms}</span>
          </Stamp>
        </DateCell>
      </BodyCell>
      <BodyCell $tall={tall}>
        <Cell>
          <Swatch $color={tint} />
          <ServiceIcon>{kindIcon[kind]}</ServiceIcon>
          <CellText>{trace.service}</CellText>
        </Cell>
      </BodyCell>
      <BodyCell $tall={tall}>
        <Cell $align="flex-end">
          <CellText>{trace.duration}</CellText>
        </Cell>
      </BodyCell>
      <BodyCell $tall={tall}>
        <Cell $align="center">
          <CellText>{trace.method}</CellText>
        </Cell>
      </BodyCell>
      <BodyCell $tall={tall}>
        <Cell $align="center">{trace.code && <Badge $color={badgeColor(trace.code)}>{trace.code}</Badge>}</Cell>
      </BodyCell>
      <BodyCell $tall={tall}>
        <Cell $plain>
          {trace.latency && (
            <LatencyBar>
              {trace.latency.map(([c, share], i) => (
                <Segment key={i} $color={c} $share={share} />
              ))}
            </LatencyBar>
          )}
        </Cell>
      </BodyCell>
      <BodyCell $tall={tall}>
        <ResourceCell>
          <Marker>&gt;</Marker>
          <span>{trace.resource}</span>
        </ResourceCell>
      </BodyCell>
    </tr>
  );
};

export default function App() {
  return (
    <Page>
      <GlobalStyle />
      <TopBar>
        <Brand>
          <LogoIcon />
          <Title>Traces</Title>
        </Brand>
        <Button type="button">Save As</Button>
        <Controls>
          <RangePicker>
            <RangeChip>15min</RangeChip>
            <RangeSelect aria-label="Time range">
              <option>The Past 15 Minutes</option>
            </RangeSelect>
            <CaretIcon />
          </RangePicker>
          <ButtonGroup>
            <GroupButton type="button" aria-label="Back">
              <RewindIcon />
            </GroupButton>
            <GroupButton type="button" aria-label="Pause" $active>
              <PauseIcon />
            </GroupButton>
            <GroupButton type="button" aria-label="Forward" disabled>
              <ForwardIcon />
            </GroupButton>
          </ButtonGroup>
          <ButtonGroup>
            <GroupButton type="button" aria-label="Zoom out">
              <ZoomOutIcon />
            </GroupButton>
            <GroupButton type="button" aria-label="Refresh" $divided>
              <RefreshIcon />
            </GroupButton>
          </ButtonGroup>
        </Controls>
      </TopBar>
      <Content>
        <SearchRow>
          <SearchBox>
            <SearchIcon size={24} />
            <Tag>
              Env:shop.ist
              <IconButton type="button" aria-label="Remove Env:shop.ist">
                ×
              </IconButton>
            </Tag>
            <BareInput aria-label="Search traces" />
            <IconButton type="button" aria-label="Clear search">
              <ClearIcon />
            </IconButton>
          </SearchBox>
          <IconButton type="button" aria-label="Edit as code" $tone="#000">
            <CodeIcon />
          </IconButton>
        </SearchRow>
        <Body>
          <Sidebar>
            <Tabs>
              <Tab type="button" $active>
                Filters (89)
                <PencilIcon />
              </Tab>
              <Tab type="button">Saved Views</Tab>
            </Tabs>
            <FacetSearch>
              <SearchIcon size={23} />
              <BareInput placeholder="Search facets" aria-label="Search facets" />
            </FacetSearch>
            <GroupHeading>
              <ChevronDown size={14} />
              CORE
            </GroupHeading>
            <Facet>
              <Heading name="Duration" />
              <MinMax>
                <Bound>
                  Min
                  <BoundInput defaultValue="0ns" />
                </Bound>
                <Bound>
                  Max
                  <BoundInput defaultValue="3.04min" />
                </Bound>
              </MinMax>
              <DualSlider>
                <Slider type="range" aria-label="Minimum duration" min={0} max={100} defaultValue={0} />
                <Slider type="range" aria-label="Maximum duration" min={0} max={100} defaultValue={100} />
              </DualSlider>
            </Facet>
            <Facet $bottom={10}>
              <Heading name="Error Type" />
              <FilterValues of="error type" />
              <Values items={errorTypes} />
            </Facet>
            <Facet $bottom={25}>
              <Heading name="Status" />
              <Values items={statuses} top={0} />
            </Facet>
            <Facet>
              <Heading name="Env" closed>
                <FilterToggle>
                  <ToggleButton type="button" aria-label="Filter by env">
                    <FunnelIcon />
                  </ToggleButton>
                  <ToggleButton type="button" aria-label="Clear env filter" $filled>
                    <CrossIcon />
                  </ToggleButton>
                </FilterToggle>
              </Heading>
            </Facet>
            <Facet $bottom={10}>
              <Heading name="Service" />
              <FilterValues of="service" />
              <Values items={serviceValues} />
            </Facet>
            <Facet>
              <Heading name="Resource" />
              <FilterValues of="resource" />
              <Values items={[["api.views.EmailAPIView", "105k"]]} />
            </Facet>
          </Sidebar>
          <Main>
            <Toolbar>
              <LinkButton type="button">
                <PanelIcon />
                Hide Controls
              </LinkButton>
              <Found>1,211,912 traces found</Found>
              <AnalyticsLink href="#analytics">
                View in App Analytics
                <ExternalIcon />
              </AnalyticsLink>
              <Button type="button">
                Options
                <GearIcon />
              </Button>
            </Toolbar>
            <Table>
              <colgroup>
                <Col $width={264} />
                <Col $width={388} />
                <Col $width={168} />
                <Col $width={128} />
                <Col $width={170} />
                <Col $width={264} />
                <Col />
              </colgroup>
              <thead>
                <tr>
                  <HeadCell $left={58}>
                    DATE<SortArrow>↑</SortArrow>
                  </HeadCell>
                  <HeadCell $left={14}>SERVICE</HeadCell>
                  <HeadCell $align="right" $right={27}>DURATION</HeadCell>
                  <HeadCell $left={15}>HTTP M...</HeadCell>
                  <HeadCell $left={14}>STATUS CODE</HeadCell>
                  <HeadCell $left={14}>LATENCY BREAKDOWN</HeadCell>
                  <HeadCell $left={26}>RESOURCE</HeadCell>
                </tr>
              </thead>
              <tbody>
                {traces.map((trace, i) => (
                  <TraceRow key={i} trace={trace} />
                ))}
              </tbody>
            </Table>
          </Main>
        </Body>
      </Content>
      <ScrollTop type="button" aria-label="Scroll to top">
        <ArrowUpIcon />
      </ScrollTop>
    </Page>
  );
}
